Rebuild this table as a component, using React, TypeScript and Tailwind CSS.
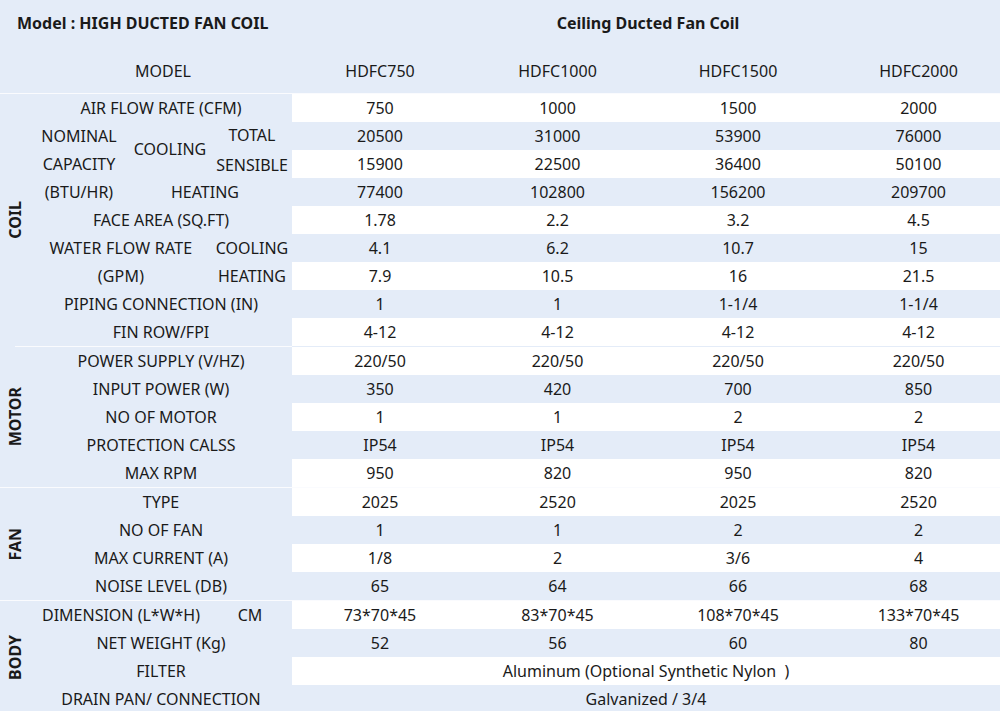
const models = ["HDFC750", "HDFC1000", "HDFC1500", "HDFC2000"];

const cols = "grid grid-cols-[176px_179px_182px_179px]";

const coilData = [
  ["750", "1000", "1500", "2000"],
  ["20500", "31000", "53900", "76000"],
  ["15900", "22500", "36400", "50100"],
  ["77400", "102800", "156200", "209700"],
  ["1.78", "2.2", "3.2", "4.5"],
  ["4.1", "6.2", "10.7", "15"],
  ["7.9", "10.5", "16", "21.5"],
  ["1", "1", "1-1/4", "1-1/4"],
  ["4-12", "4-12", "4-12", "4-12"],
];

const motorRows = [
  ["POWER SUPPLY (V/HZ)", "220/50", "220/50", "220/50", "220/50"],
  ["INPUT POWER (W)", "350", "420", "700", "850"],
  ["NO OF MOTOR", "1", "1", "2", "2"],
  ["PROTECTION CALSS", "IP54", "IP54", "IP54", "IP54"],
  ["MAX RPM", "950", "820", "950", "820"],
];

const fanRows = [
  ["TYPE", "2025", "2520", "2025", "2520"],
  ["NO OF FAN", "1", "1", "2", "2"],
  ["MAX CURRENT (A)", "1/8", "2", "3/6", "4"],
  ["NOISE LEVEL (DB)", "65", "64", "66", "68"],
];

const DataRow = ({ values, white }: { values: string[]; white: boolean }) => (
  <div className={`${cols} h-[28px] items-center text-center ${white ? "bg-white" : ""}`}>
    {values.map((v, i) => (
      <span key={i}>{v}</span>
    ))}
  </div>
);

const WideRow = ({ text, white }: { text: string; white: boolean }) => (
  <div className={`h-[28px] flex items-center justify-center whitespace-pre ${white ? "bg-white" : ""}`}>
    {text}
  </div>
);

const SideLabel = ({ text }: { text: string }) => (
  <div className="w-[30px] flex items-center justify-center">
    <span className="[writing-mode:vertical-rl] rotate-180 font-bold">{text}</span>
  </div>
);

const Label = ({ children }: { children: React.ReactNode }) => (
  <div className="h-[28px] flex items-center justify-center">{children}</div>
);

const Section = ({
  name,
  labels,
  rows,
  border = "",
}: {
  name: string;
  labels: React.ReactNode;
  rows: React.ReactNode;
  border?: string;
}) => (
  <div className={`flex ${border}`}>
    <SideLabel text={name} />
    <div className="w-[262px] flex flex-col">{labels}</div>
    <div className="flex-1 flex flex-col min-w-0">{rows}</div>
  </div>
);

export default function App() {
  return (
    <div
      className="w-[1000px] h-[711px] overflow-hidden bg-[#e4ecf8] text-[16px] text-[#1a1a1a]"
      style={{ fontFamily: '"Noto Sans", "Open Sans", sans-serif' }}
    >
      {/* title */}
      <div className="flex h-[45px] items-center font-bold">
        <div className="w-[292px] pl-[17px]">Model : HIGH DUCTED FAN COIL</div>
        <div className="flex-1 text-center pl-[4px]">Ceiling Ducted Fan Coil</div>
      </div>
      <div className="flex h-[49px] items-center pt-[4px] border-b border-white/80">
        <div className="w-[292px] text-center pl-[34px]">MODEL</div>
        <div className={`${cols} flex-1 min-w-0 text-center`}>
          {models.map((m) => (
            <span key={m}>{m}</span>
          ))}
        </div>
      </div>

      {/* coil */}
      <Section
        name="COIL"
        labels={
          <>
            <Label>AIR FLOW RATE (CFM)</Label>
            <div className="flex h-[84px]">
              <div className="w-[98px] flex flex-col items-center">
                <div className="h-[28px] leading-[28px]">NOMINAL</div>
                <div className="h-[28px] leading-[28px]">CAPACITY</div>
                <div className="h-[28px] leading-[28px]">(BTU/HR)</div>
              </div>
              <div className="flex-1 flex flex-col">
                <div className="flex h-[56px]">
                  <div className="w-[84px] flex items-center justify-center pb-[2px]">COOLING</div>
                  <div className="flex-1 flex flex-col items-center">
                    <div className="h-[28px] leading-[26px]">TOTAL</div>
                    <div className="h-[28px] leading-[30px]">SENSIBLE</div>
                  </div>
                </div>
                <div className="h-[28px] flex items-center justify-center pr-[10px]">HEATING</div>
              </div>
            </div>
            <Label>FACE AREA (SQ.FT)</Label>
            <div className="flex h-[56px]">
              <div className="w-[182px] flex flex-col items-center tracking-[0.2px]">
                <div className="h-[28px] leading-[28px]">WATER FLOW RATE</div>
                <div className="h-[28px] leading-[28px]">(GPM)</div>
              </div>
              <div className="flex-1 flex flex-col items-center">
                <div className="h-[28px] leading-[28px]">COOLING</div>
                <div className="h-[28px] leading-[28px]">HEATING</div>
              </div>
            </div>
            <Label>PIPING CONNECTION (IN)</Label>
            <Label>FIN ROW/FPI</Label>
          </>
        }
        rows={coilData.map((r, i) => (
          <DataRow key={i} values={r} white={i % 2 === 0} />
        ))}
      />

      {/* motor */}
      <div className="ml-[15px] h-[1px] bg-white/80 w-[277px]" />
      <Section
        name="MOTOR"
        labels={motorRows.map((r) => (
          <Label key={r[0]}>{r[0]}</Label>
        ))}
        rows={motorRows.map((r, i) => (
          <DataRow key={i} values={r.slice(1)} white={i % 2 === 0} />
        ))}
      />

      {/* fan */}
      <Section
        name="FAN"
        border="border-t border-white/80"
        labels={fanRows.map((r) => (
          <Label key={r[0]}>{r[0]}</Label>
        ))}
        rows={fanRows.map((r, i) => (
          <DataRow key={i} values={r.slice(1)} white={i % 2 === 0} />
        ))}
      />

      {/* body */}
      <Section
        name="BODY"
        border="border-t border-white/80"
        labels={
          <>
            <div className="flex h-[28px] items-center">
              <div className="w-[182px] text-center">DIMENSION (L*W*H)</div>
              <div className="flex-1 text-center pr-[4px]">CM</div>
            </div>
            <Label>NET WEIGHT (Kg)</Label>
            <Label>FILTER</Label>
            <Label>DRAIN PAN/ CONNECTION</Label>
          </>
        }
        rows={
          <>
            <DataRow values={["73*70*45", "83*70*45", "108*70*45", "133*70*45"]} white />
            <DataRow values={["52", "56", "60", "80"]} white={false} />
            <WideRow text={"Aluminum (Optional Synthetic Nylon  )"} white />
            <WideRow text="Galvanized / 3/4" white={false} />
          </>
        }
      />
    </div>
  );
}
